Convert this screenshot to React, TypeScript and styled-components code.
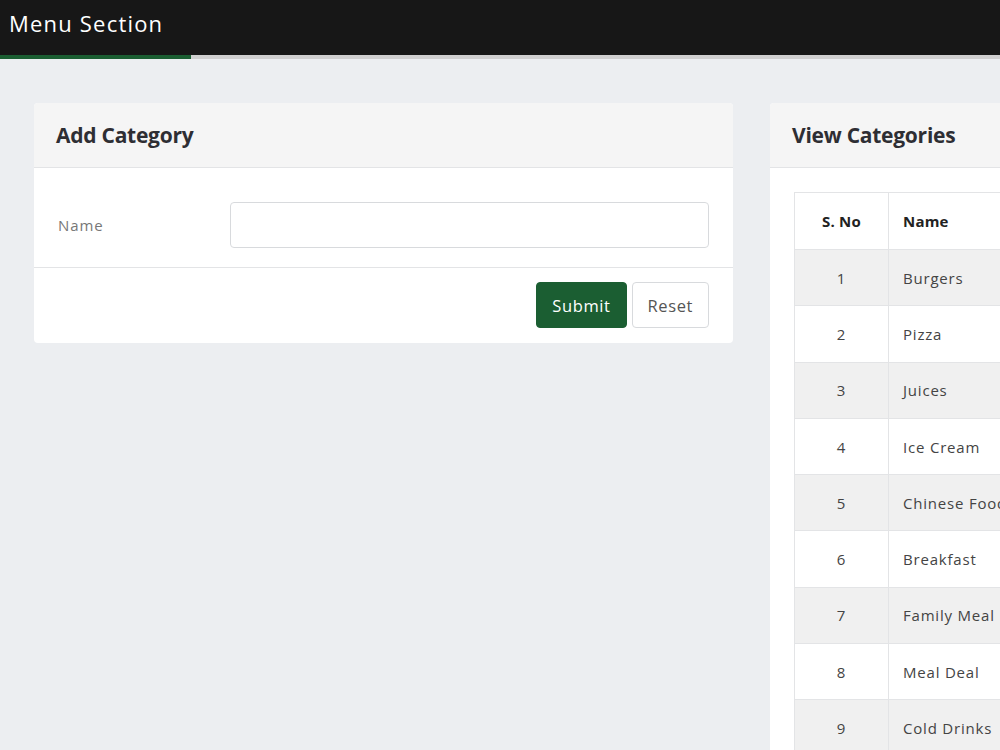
import React, { FormEvent, useState } from 'react';
import styled, { createGlobalStyle } from 'styled-components';

const Colors = {
    HEADER: '#171717',
    GREEN: '#1b5e32',
    PAGE: '#eceef1',
    CARD_HEAD: '#f5f5f5',
    BORDER: '#e3e4e6',
    TEXT: '#333',
};

const GlobalStyle = createGlobalStyle`
    html, body {
        margin: 0;
        padding: 0;
        background: ${Colors.PAGE};
        overflow: hidden;
        font-family: 'Open Sans', 'Noto Sans', sans-serif;
    }
    * { box-sizing: border-box; }
`;

const TopBar = styled.header`
    height: 55px;
    background: ${Colors.HEADER};
    display: flex;
    align-items: center;
    padding: 0 0 10px 9px;
`;

const TopTitle = styled.h1`
    margin: 0;
    color: #fff;
    font-size: 22px;
    font-weight: 500;
    letter-spacing: 1.2px;
`;

const Progress = styled.div`
    height: 4px;
    background: #cfcfcf;
`;

const ProgressFill = styled.div`
    height: 100%;
    background: ${Colors.GREEN};
`;

const Main = styled.main`
    display: flex;
    gap: 37px;
    padding: 44px 34px;
    align-items: flex-start;
    width: 1600px;
`;

const Card = styled.section`
    width: 699px;
    flex: none;
    background: #fff;
    border-radius: 4px;
    overflow: hidden;
`;

const CardHead = styled.div`
    height: 65px;
    background: ${Colors.CARD_HEAD};
    border-bottom: 1px solid ${Colors.BORDER};
    display: flex;
    align-items: center;
    padding: 0 22px 1px;
`;

const CardTitle = styled.h2`
    margin: 0;
    font-size: 21px;
    font-weight: 700;
    letter-spacing: -0.25px;
    color: #2e2e33;
`;

const FormRow = styled.div`
    display: grid;
    grid-template-columns: 172px 1fr;
    align-items: center;
    padding: 34px 24px 19px;
    border-bottom: 1px solid ${Colors.BORDER};
`;

const FieldLabel = styled.label`
    color: #777;
    font-size: 15px;
    letter-spacing: 0.9px;
`;

const TextInput = styled.input`
    height: 46px;
    border: 1px solid #d8dadd;
    border-radius: 4px;
    font-size: 15px;
    padding: 0 12px;
    font-family: inherit;
`;

const Actions = styled.div`
    display: flex;
    justify-content: flex-end;
    gap: 5px;
    padding: 14px 24px 15px;
`;

const Button = styled.button<{ $primary?: boolean }>`
    height: 46px;
    padding: 0 15px;
    border-radius: 4px;
    font-size: 16.5px;
    letter-spacing: 0.6px;
    font-family: inherit;
    border: 1px solid ${(p) => (p.$primary ? Colors.GREEN : '#d8dadd')};
    background: ${(p) => (p.$primary ? Colors.GREEN : '#fff')};
    color: ${(p) => (p.$primary ? '#fff' : '#555')};
    cursor: pointer;
`;

const TableWrap = styled.div`
    padding: 24px;
`;

const Table = styled.table`
    width: 651px;
    border-collapse: collapse;
    font-size: 15px;
    letter-spacing: 0.8px;
    color: #444;
`;

const Th = styled.th<{ $center?: boolean }>`
    height: 57px;
    border: 1px solid ${Colors.BORDER};
    font-weight: 700;
    letter-spacing: 0.2px;
    color: #222;
    text-align: ${(p) => (p.$center ? 'center' : 'left')};
    padding: 0 14px;
`;

const Tr = styled.tr<{ $odd: boolean }>`
    background: ${(p) => (p.$odd ? '#f0f0f0' : '#fff')};
`;

const Td = styled.td<{ $center?: boolean }>`
    height: 56.3px;
    border: 1px solid ${Colors.BORDER};
    text-align: ${(p) => (p.$center ? 'center' : 'left')};
    padding: 0 14px;
    white-space: nowrap;
`;

const categories = [
    'Burgers',
    'Pizza',
    'Juices',
    'Ice Cream',
    'Chinese Food',
    'Breakfast',
    'Family Meal',
    'Meal Deal',
    'Cold Drinks',
];

export default function App() {
    const [name, setName] = useState('');

    const submit = (event: FormEvent) => {
        event.preventDefault();
        return false;
    };

    return (
        <>
            <GlobalStyle />
            <TopBar>
                <TopTitle>Menu Section</TopTitle>
            </TopBar>
            <Progress>
                <ProgressFill style={{ width: 191 }} />
            </Progress>
            <Main>
                <Card>
                    <CardHead>
                        <CardTitle>Add Category</CardTitle>
                    </CardHead>
                    <form onSubmit={submit}>
                        <FormRow>
                            <FieldLabel htmlFor="name">Name</FieldLabel>
                            <TextInput
                                id="name"
                                value={name}
                                onChange={(e) => setName(e.target.value)}
                            />
                        </FormRow>
                        <Actions>
                            <Button $primary type="submit">
                                Submit
                            </Button>
                            <Button type="reset" onClick={() => setName('')}>
                                Reset
                            </Button>
                        </Actions>
                    </form>
                </Card>
                <Card>
                    <CardHead>
                        <CardTitle>View Categories</CardTitle>
                    </CardHead>
                    <TableWrap>
                        <Table>
                            <colgroup>
                                <col style={{ width: 94 }} />
                                <col />
                            </colgroup>
                            <thead>
                                <tr>
                                    <Th $center>S. No</Th>
                                    <Th>Name</Th>
                                </tr>
                            </thead>
                            <tbody>
                                {categories.map((c, i) => (
                                    <Tr key={c} $odd={i % 2 === 0}>
                                        <Td $center>{i + 1}</Td>
                                        <Td>{c}</Td>
                                    </Tr>
                                ))}
                            </tbody>
                        </Table>
                    </TableWrap>
                </Card>
            </Main>
        </>
    );
}
